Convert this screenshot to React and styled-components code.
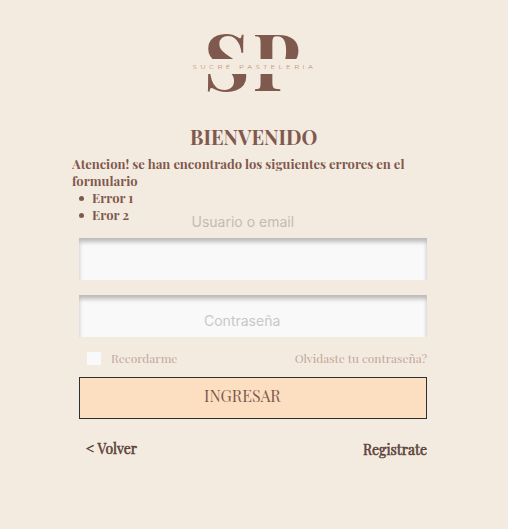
import React from "react";
import styled, { createGlobalStyle } from "styled-components";

const GlobalStyle = createGlobalStyle`
  * { box-sizing: border-box; }
  body { margin: 0; background: #f4ebe0; }
`;

const Page = styled.main`
  display: flex;
  flex-direction: column;
  width: 508px;
  height: 529px;
  padding: 30px 81px 0 72px;
  background: #f4ebe0;
  color: #80594e;
  font-family: "Playfair Display", "Liberation Serif", serif;
  overflow: hidden;
`;

const Logo = styled.svg`
  display: block;
  flex: none;
  width: 130px;
  height: 66px;
  margin-left: 116px;
`;

const Title = styled.h1`
  margin: 27px 0 0 118px;
  font-size: 20px;
  line-height: 27px;
  white-space: nowrap;
`;

const Errors = styled.section`
  height: 69px;
  margin-top: 5px;
  font-size: 13px;
  font-weight: 700;
  line-height: 17px;
`;

const Line = styled.p`
  margin: 0;
`;

const ErrorList = styled.ul`
  margin: 0;
  padding: 0;
  list-style: none;
`;

const ErrorItem = styled.li`
  display: flex;
  align-items: center;
  gap: 8px;
  padding-left: 7px;

  &::before {
    content: "";
    width: 5px;
    height: 5px;
    margin: 2px 0 0;
    border-radius: 50%;
    background: currentColor;
  }
`;

const Form = styled.form`
  display: flex;
  flex-direction: column;
  margin: 0 0 0 7px;
  width: 348px;
`;

const Label = styled.label`
  height: 18px;
  margin: -11px 0 7px 112.5px;
  color: #c3bbb1;
  font: 400 14px/18px Inter, sans-serif;
  white-space: nowrap;
`;

const Field = styled.div`
  height: 42px;
  margin-bottom: ${(p) => p.$gap}px;
  padding: 17px 0 0 125px;
  background: #f9f9f9;
  box-shadow: inset 0 4px 4px rgba(0, 0, 0, 0.25);
  color: #c8c8c8;
  font: 400 14px/18px Inter, sans-serif;
`;

const Options = styled.div`
  display: flex;
  align-items: flex-start;
  height: 16px;
  padding-left: 8px;
  color: #c0a69a;
  font-size: 12px;
  line-height: 14px;
  white-space: nowrap;
`;

const Box = styled.span`
  width: 14px;
  height: 13px;
  margin: 1px 10px 0 0;
  background: #f9f9f9;
`;

const Caption = styled.span`
  margin-left: ${(p) => (p.$end ? "auto" : 0)};
`;

const Submit = styled.button`
  height: 42px;
  margin: 10px 0 0;
  padding: 0 0 5px 124px;
  border: 1px solid #263238;
  background: #fcdfc1;
  color: #80594e;
  font: 16px/20px "Playfair Display", "Liberation Serif", serif;
  text-align: left;
`;

const Footer = styled.nav`
  display: flex;
  justify-content: space-between;
  margin-top: 21px;
  padding-left: 7px;
`;

const Link = styled.a`
  margin-top: ${(p) => p.$drop || 0}px;
  color: #5c433b;
  font-size: 14px;
  line-height: 18px;
  -webkit-text-stroke: 0.55px #5c433b;
`;

export default function App() {
  return (
    <Page>
      <GlobalStyle />
      <Logo viewBox="188 30 130 66" role="img" aria-label="Sucré Pastelería">
        <g fill="#80594e" fontFamily="Playfair Display, Liberation Serif, serif" fontWeight="700">
          <text x="203.5" y="91" fontSize="78" textLength="46" lengthAdjust="spacingAndGlyphs">S</text>
          <text x="252.5" y="91" fontSize="79" textLength="47.5" lengthAdjust="spacingAndGlyphs">P</text>
        </g>
        <rect x="188" y="59" width="130" height="15" fill="#f4ebe0" />
        <text x="192.5" y="69.2" fill="#c08e75" fontFamily="Montserrat, Lato, sans-serif" fontSize="6.2" letterSpacing="3.1" textLength="124" lengthAdjust="spacingAndGlyphs">
          SUCRÉ PASTELERIA
        </text>
      </Logo>
      <Title>BIENVENIDO</Title>
      <Errors>
        <Line>Atencion! se han encontrado los siguientes errores en el formulario</Line>
        <ErrorList>
          <ErrorItem>Error 1</ErrorItem>
          <ErrorItem>Eror 2</ErrorItem>
        </ErrorList>
      </Errors>
      <Form>
        <Label>Usuario o email</Label>
        <Field $gap={15} />
        <Field $gap={14}>Contraseña</Field>
        <Options>
          <Box />
          <Caption>Recordarme</Caption>
          <Caption $end>Olvidaste tu contraseña?</Caption>
        </Options>
        <Submit type="button">INGRESAR</Submit>
        <Footer>
          <Link>&lt; Volver</Link>
          <Link $drop={1}>Registrate</Link>
        </Footer>
      </Form>
    </Page>
  );
}
